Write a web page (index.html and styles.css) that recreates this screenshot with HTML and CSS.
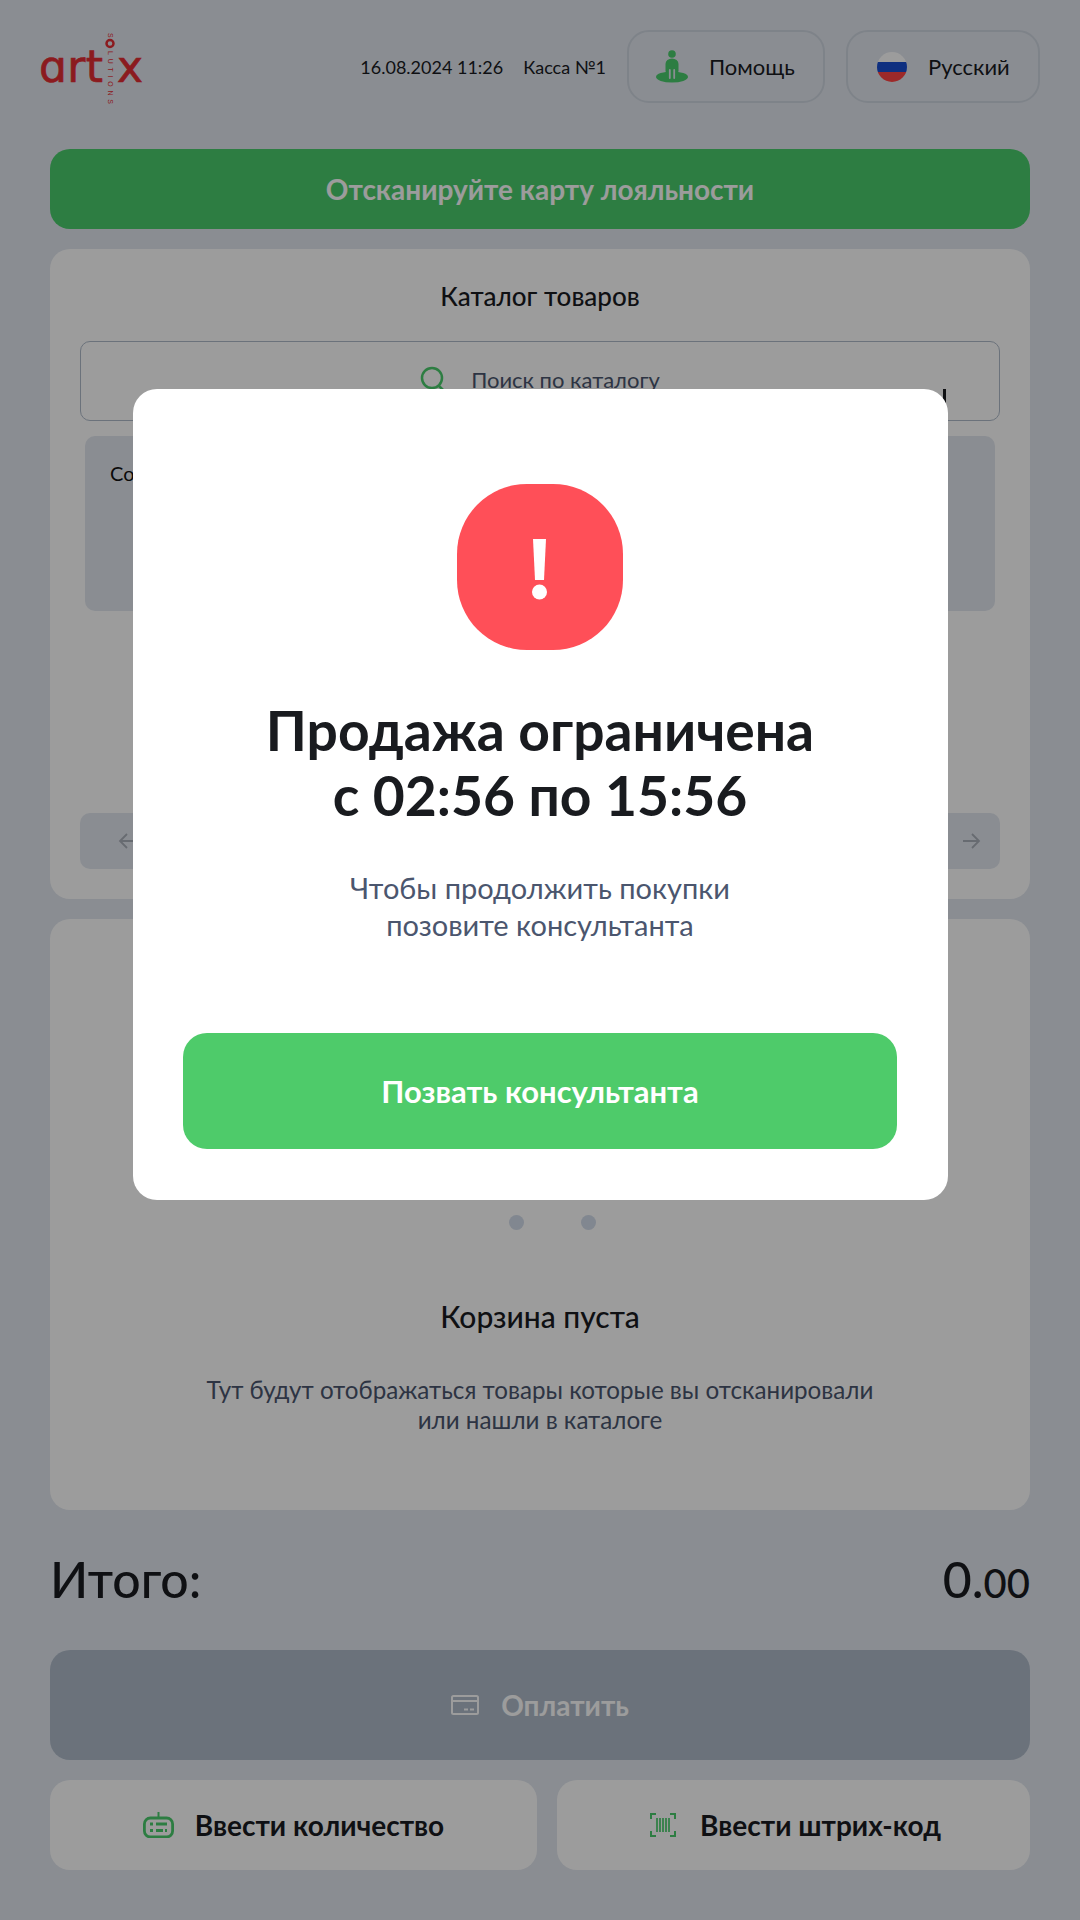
FILE: index.html
```html
<!DOCTYPE html>
<html lang="ru">
<head>
    <meta charset="UTF-8">
    <meta name="viewport" content="width=device-width, initial-scale=1.0">
    <title>Касса №1</title>
    <link rel="stylesheet" href="styles.css">
</head>
<body>
    <header class="top-bar">
        <svg class="logo" width="104" height="74" viewBox="0 0 104 74">
            <text class="logo-word" x="-1" y="52" textLength="64">ɑrt</text>
            <text class="logo-word" x="77" y="52" textLength="26" lengthAdjust="spacingAndGlyphs">x</text>
            <circle class="logo-ring" cx="70" cy="13.500" r="3.500"/>
            <text class="logo-small" transform="translate(67.500 3) rotate(90)" x="0" y="0">S</text>
            <text class="logo-small" transform="translate(67.500 21) rotate(90)" x="0" y="0" textLength="53">LUTIONS</text>
        </svg>
        <div class="top-info">
            <span>16.08.2024 11:26</span>
            <span>Касса №1</span>
        </div>
        <button class="top-btn help-btn">
            <svg width="32" height="33" viewBox="0 0 32 33">
                <circle cx="16" cy="4" r="3.800" fill="#4acd6c"/>
                <ellipse cx="16" cy="27" rx="16" ry="5.500" fill="#4acd6c"/>
                <path d="M9.500 14a6.500 5.500 0 0 1 13 0v7a2 2 0 0 1-2 2v4h-9v-4a2 2 0 0 1-2-2z" fill="#4acd6c"/>
                <path d="M13.800 20v8M18.200 20v8" stroke="#e2e7ef" stroke-width="1.800" stroke-linecap="round"/>
            </svg>
            Помощь
        </button>
        <button class="top-btn lang-btn">
            <svg width="30" height="30" viewBox="0 0 30 30">
                <clipPath id="flagClip"><circle cx="15" cy="15" r="15"/></clipPath>
                <g clip-path="url(#flagClip)">
                    <rect width="30" height="10" fill="#fff"/>
                    <rect y="10" width="30" height="10" fill="#184dd2"/>
                    <rect y="20" width="30" height="10" fill="#ff4444"/>
                </g>
            </svg>
            Русский
        </button>
    </header>

    <main class="content">
        <div class="loyalty-bar">Отсканируйте карту лояльности</div>

        <section class="card catalog">
            <h2 class="card-title">Каталог товаров</h2>
            <div class="search-box">
                <svg width="26" height="30" viewBox="0 0 26 30">
                    <circle cx="12" cy="13" r="10" fill="none" stroke="#4acd6c" stroke-width="2.500"/>
                    <path d="M19 21l5 5" stroke="#4acd6c" stroke-width="2.500"/>
                </svg>
                <span>Поиск по каталогу</span>
                <span class="search-mark"></span>
            </div>
            <div class="category-panel">Соусы</div>
            <div class="pager">
                <button class="pager-btn">
                    <svg width="20" height="20" viewBox="0 0 20 20"><path d="M18 10H2M9 3l-7 7 7 7" fill="none" stroke="#a9afb9" stroke-width="1.800"/></svg>
                </button>
                <button class="pager-btn next">
                    <svg width="20" height="20" viewBox="0 0 20 20"><path d="M2 10h16M11 3l7 7-7 7" fill="none" stroke="#a9afb9" stroke-width="1.800"/></svg>
                </button>
            </div>
        </section>

        <section class="card cart">
            <div class="dots"><i></i><i></i></div>
            <h2 class="card-title cart-title">Корзина пуста</h2>
            <p class="hint">Тут будут отображаться товары которые вы отсканировали<br>или нашли в каталоге</p>
        </section>

        <div class="total">
            <span>Итого:</span>
            <span>0.<small>00</small></span>
        </div>

        <button class="pay-btn">
            <svg width="28" height="20" viewBox="0 0 28 20">
                <rect x="1" y="1" width="26" height="18" rx="1.500" fill="none" stroke="#fff" stroke-width="2"/>
                <path d="M1 6h26M13 14.500h4M19 14.500h4" stroke="#fff" stroke-width="2"/>
            </svg>
            Оплатить
        </button>

        <div class="actions">
            <button class="action-btn qty">
                <svg width="31" height="26" viewBox="0 0 31 26">
                    <path d="M15.500 0v6" stroke="#4acd6c" stroke-width="2"/>
                    <rect x="1.400" y="6" width="28.200" height="19" rx="6" fill="none" stroke="#4acd6c" stroke-width="2.800"/>
                    <path d="M7 12h3M13 12h11M7 18.500h3M13 18.500h7M22 18.500h2" stroke="#4acd6c" stroke-width="2.800"/>
                </svg>
                Ввести количество
            </button>
            <button class="action-btn code">
                <svg width="26" height="24" viewBox="0 0 26 24">
                    <path d="M6 1H1v5M20 1h5v5M6 23H1v-5M20 23h5v-5" fill="none" stroke="#4acd6c" stroke-width="2"/>
                    <path d="M7 5v14M10 5v14M13 5v14M16 5v14M19 5v14" stroke="#4acd6c" stroke-width="1.700"/>
                </svg>
                Ввести штрих-код
            </button>
        </div>
    </main>

    <!-- Sale restriction dialog -->
    <div class="overlay">
        <div class="modal">
            <svg class="alert-icon" width="166" height="166" viewBox="0 0 166 166">
                <rect width="166" height="166" rx="70" fill="#ff4f58"/>
                <path d="M76 55h13l-2 41h-9z" fill="#fff"/>
                <circle cx="82.500" cy="108" r="7.500" fill="#fff"/>
            </svg>
            <h1 class="modal-title">Продажа ограничена<br>с 02:56 по 15:56</h1>
            <p class="modal-text">Чтобы продолжить покупки<br>позовите консультанта</p>
            <button class="call-btn">Позвать консультанта</button>
        </div>
    </div>
</body>
</html>
```

FILE: styles.css
```css
* {
    box-sizing: border-box;
}
body {
    margin: 0;
    width: 1080px;
    height: 1920px;
    position: relative;
    overflow: hidden;
    background-color: #e2e7ef;
    font-family: Lato, "Noto Sans", sans-serif;
    color: #191b1f;
}
button {
    font-family: inherit;
    border: none;
    cursor: pointer;
}
.top-bar {
    display: flex;
    align-items: center;
    height: 73px;
    margin-top: 30px;
    padding: 0 40px;
}
.logo {
    overflow: visible;
}
.logo-word {
    font-family: "DejaVu Sans", sans-serif;
    font-size: 44px;
    fill: #e42d33;
    stroke: #e42d33;
    stroke-width: 0.700;
}
.logo-ring {
    fill: none;
    stroke: #e42d33;
    stroke-width: 2.500;
}
.logo-small {
    font-family: "Liberation Sans", sans-serif;
    font-size: 7px;
    fill: #e42d33;
}
.top-info {
    display: flex;
    gap: 20px;
    margin-left: auto;
    margin-right: 21px;
    font-size: 18px;
    padding-top: 1px;
}
.top-btn {
    display: flex;
    align-items: center;
    height: 73px;
    border: 2px solid #cfd6e0;
    border-radius: 22px;
    background: none;
    font-size: 22px;
    color: #191b1f;
}
.help-btn {
    width: 198px;
    padding-left: 27px;
    gap: 21px;
}
.lang-btn {
    width: 194px;
    margin-left: 21px;
    padding-left: 29px;
    gap: 21px;
}
.content {
    display: flex;
    flex-direction: column;
    padding: 46px 50px 0;
}
.loyalty-bar {
    height: 80px;
    border-radius: 20px;
    background-color: #4acd6c;
    color: white;
    font-size: 28px;
    font-weight: 700;
    display: flex;
    align-items: center;
    justify-content: center;
}
.card {
    background: white;
    border-radius: 20px;
    margin-top: 20px;
}
.card-title {
    margin: 0;
    font-size: 26px;
    font-weight: 500;
    text-align: center;
}
.cart-title {
    font-size: 30px;
}
.catalog {
    height: 650px;
    padding: 31px 30px 0;
}
.search-box {
    display: flex;
    align-items: center;
    justify-content: center;
    position: relative;
    height: 80px;
    margin-top: 29px;
    padding-bottom: 3px;
    gap: 25px;
    border: 1px solid #afbbca;
    border-radius: 10px;
    font-size: 22px;
    color: #4b566e;
}
.search-mark {
    position: absolute;
    top: 47px;
    right: 53px;
    width: 3px;
    height: 16px;
    background: #191b1f;
}
.category-panel {
    height: 175px;
    margin: 15px 5px 0;
    padding: 25px 25px;
    border-radius: 10px;
    background-color: #e2e7ef;
    font-size: 20px;
    color: #111;
}
.pager {
    display: flex;
    gap: 20px;
    margin-top: 202px;
}
.pager-btn {
    flex: 1;
    display: flex;
    align-items: center;
    height: 56px;
    padding: 0 38px;
    border-radius: 10px;
    background-color: #e2e7ef;
}
.pager-btn.next {
    justify-content: flex-end;
    padding: 0 19px;
}
.cart {
    height: 591px;
    display: flex;
    flex-direction: column;
    align-items: center;
    padding-top: 296px;
}
.dots {
    display: flex;
    gap: 57px;
    margin-bottom: 68px;
    margin-left: 24px;
}
.dots i {
    width: 15px;
    height: 15px;
    border-radius: 50%;
    background-color: #d3ddeb;
}
.hint {
    margin: 41px 0 0;
    font-size: 24.200px;
    line-height: 30px;
    text-align: center;
    color: #4b566e;
}
.total {
    display: flex;
    justify-content: space-between;
    align-items: baseline;
    margin-top: 36px;
    font-size: 50px;
    font-weight: 500;
    line-height: 66px;
}
.total small {
    font-size: 40px;
}
.pay-btn {
    display: flex;
    align-items: center;
    justify-content: center;
    gap: 22px;
    height: 110px;
    margin-top: 34px;
    border-radius: 20px;
    background-color: #afbbca;
    color: white;
    font-size: 28px;
    font-weight: 700;
}
.actions {
    display: flex;
    gap: 20px;
    margin-top: 20px;
}
.action-btn {
    display: flex;
    align-items: center;
    justify-content: center;
    height: 90px;
    gap: 21px;
    border-radius: 20px;
    background: white;
    color: #191b1f;
    font-size: 28px;
    font-weight: 700;
}
.qty {
    width: 487px;
}
.code {
    width: 473px;
    gap: 24px;
    padding-left: 10px;
}
.overlay {
    position: absolute;
    inset: 0;
    display: flex;
    justify-content: center;
    align-items: flex-start;
    padding-top: 389px;
    background: rgba(0, 0, 0, 0.39);
}
.modal {
    display: flex;
    flex-direction: column;
    align-items: center;
    width: 815px;
    height: 811px;
    padding: 95px 50px 0;
    border-radius: 24px;
    background: white;
}
.modal-title {
    margin: 48px 0 0;
    font-size: 55.200px;
    font-weight: 700;
    line-height: 65px;
    text-align: center;
}
.modal-text {
    margin: 41px 0 0;
    font-size: 29px;
    line-height: 37px;
    text-align: center;
    color: #4b566e;
}
.call-btn {
    width: 714px;
    height: 116px;
    margin-top: 90px;
    border-radius: 24px;
    background-color: #4ecb6a;
    color: white;
    font-size: 31px;
    font-weight: 700;
}
```
